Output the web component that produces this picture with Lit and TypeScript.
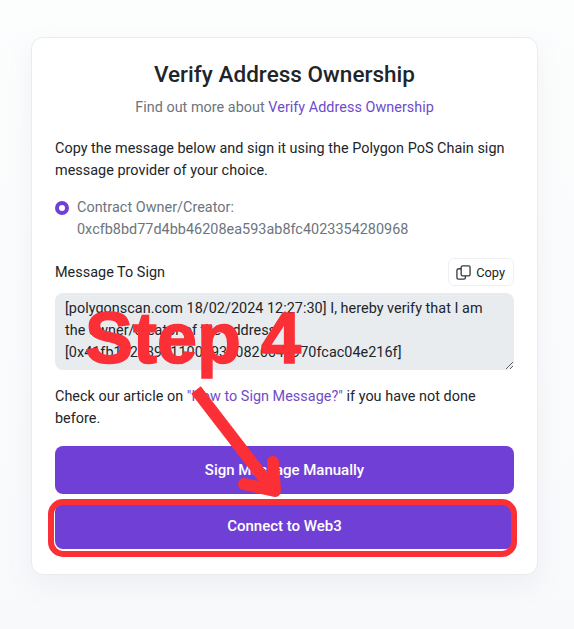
import { LitElement, html, css } from "lit";
import { customElement } from "lit/decorators.js";

@customElement("app-root")
export class AppRoot extends LitElement {
  static styles = css`
    :host { display: block; height: 629px; box-sizing: border-box; padding: 37px 36px 0 31px; background: linear-gradient(#fcfdfd, #f8f9fb); font-family: Roboto, "Liberation Sans", sans-serif; font-size: 14.4px; letter-spacing: 0.03px; color: #212529; overflow: hidden; position: relative; }
    .card { box-sizing: border-box; height: 538px; background: #fff; border: 1px solid #e9ecef; border-radius: 12px; padding: 20px 23px 0; box-shadow: 0 10px 24px rgba(140,152,164,.1); display: flex; flex-direction: column; position: relative; }
    h1 { margin: 0; font-size: 22.5px; line-height: 32px; font-weight: 500; text-align: center; color: #212529; }
    .sub { margin: 7px 0 0; text-align: center; line-height: 21px; color: #6c757d; }
    a { color: #6f4bc8; text-decoration: none; }
    .intro { margin: 20px 0 0; line-height: 21.6px; }
    .radio { display: flex; gap: 8px; margin-top: 16px; color: #6c757d; line-height: 21.6px; }
    .dot { flex: none; width: 14px; height: 14px; box-sizing: border-box; border: 4px solid #7040d6; border-radius: 50%; margin-top: 4px; background: #fff; }
    .msg-head { display: flex; justify-content: space-between; align-items: center; margin-top: 18px; }
    .copy { display: flex; align-items: center; gap: 5px; height: 28px; box-sizing: border-box; padding: 0 8px 0 7px; background: #fff; border: 1px solid #eef0f3; border-radius: 6px; font: inherit; font-size: 12.8px; color: #212529; }
    textarea { display: block; box-sizing: border-box; width: 459px; height: 77px; margin-top: 7px; border: none; outline: none; border-radius: 8px; background: #e9ecef; padding: 5px 10px; font: inherit; letter-spacing: inherit; line-height: 22px; color: #212529; resize: vertical; overflow: hidden; }
    .check { margin: 16px 0 0; line-height: 21.6px; }
    .btn { display: block; width: 100%; height: 48px; border: none; border-radius: 8px; background: #7040d6; color: #fff; font: inherit; font-size: 15px; font-weight: 500; }
    .b1 { margin-top: 16px; }
    .b2 { margin-top: 10px; height: 45px; }
    .ring { position: absolute; left: 48px; top: 499px; width: 469px; height: 58px; box-sizing: border-box; border: 6.5px solid #fb2f36; border-radius: 15px; pointer-events: none; }
    .step { position: absolute; left: 85px; top: 298px; font-family: "Liberation Sans", Arial, sans-serif; font-weight: 700; font-size: 72px; line-height: 80px; color: #fb2f36; letter-spacing: 0; -webkit-text-stroke: 1.5px #fb2f36; white-space: nowrap; }
    .arrow { position: absolute; left: 0; top: 0; pointer-events: none; }
  `;

  render() {
    return html`
      <div class="card">
        <h1>Verify Address Ownership</h1>
        <p class="sub">Find out more about <a href="#">Verify Address Ownership</a></p>
        <p class="intro">Copy the message below and sign it using the Polygon PoS Chain sign message provider of your choice.</p>
        <div class="radio">
          <span class="dot"></span>
          <div>Contract Owner/Creator:<br />0xcfb8bd77d4bb46208ea593ab8fc4023354280968</div>
        </div>
        <div class="msg-head">
          <span>Message To Sign</span>
          <button class="copy">
            <svg width="15" height="15" viewBox="0 0 16 16" fill="none" stroke="#343a40" stroke-width="1.4" stroke-linejoin="round">
              <rect x="5.5" y="1" width="9.5" height="10.5" rx="1.5"></rect>
              <path d="M5.5 4H3a2 2 0 0 0-2 2v7.5A1.5 1.5 0 0 0 2.5 15h6a1.5 1.5 0 0 0 1.5-1.5v-2"></path>
            </svg>
            Copy
          </button>
        </div>
        <textarea readonly>[polygonscan.com 18/02/2024 12:27:30] I, hereby verify that I am the owner/creator of the address [0x41fb1827392110079390826641970fcac04e216f]</textarea>
        <p class="check">Check our article on <a href="#">"How to Sign Message?"</a> if you have not done before.</p>
        <button class="btn b1">Sign Message Manually</button>
        <button class="btn b2">Connect to Web3</button>
      </div>
      <div class="ring"></div>
      <div class="step">Step 4</div>
      <svg class="arrow" width="574" height="629" viewBox="0 0 574 629" fill="none" stroke="#fb2f36" stroke-linecap="round" stroke-linejoin="round">
        <path d="M196 390L273 490" stroke-width="12" stroke-linecap="butt"></path>
        <path d="M273 462L275 491L244 484" stroke-width="12"></path>
      </svg>
    `;
  }
}
